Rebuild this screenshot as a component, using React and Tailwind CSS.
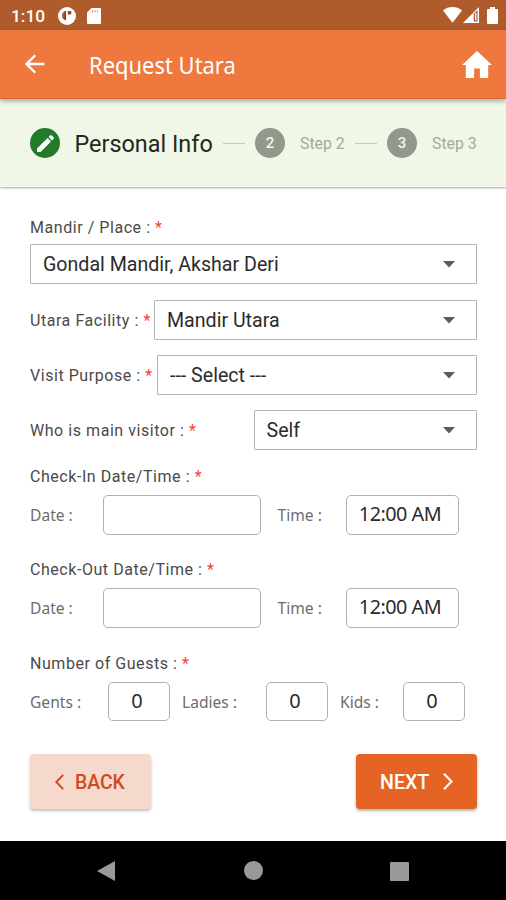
import { useState } from "react";

const roboto = "font-['Roboto',sans-serif]";
const noto = "font-['Noto_Sans',sans-serif]";

function StatusBar() {
  return (
    <div className="h-[30px] bg-[#af5b2b] flex items-center justify-between pl-[11px] pr-[8px] text-white">
      <div className="flex items-center">
        <span className="w-[47px] text-[17.3px] leading-[30px] font-medium pt-px">1:10</span>
        <svg width="18" height="18" viewBox="0 0 18 18" className="mt-px">
          <circle cx="9" cy="9" r="9" fill="#fff" />
          <path d="M8 3.700v9.600C5.500 13 4 11.300 4 8.700S5.500 4.200 8 3.700z" fill="#af5b2b" />
          <path d="M7.300 4v9" stroke="#7d3c18" strokeWidth="1.400" />
          <rect x="9.700" y="4" width="3.600" height="3.400" rx="1" fill="#8f451d" />
        </svg>
        <svg width="14" height="16" viewBox="0 0 14 16" className="ml-[11px] mt-px">
          <path d="M4.500 0H13a1 1 0 0 1 1 1v14a1 1 0 0 1-1 1H1a1 1 0 0 1-1-1V4.500z" fill="#fff" />
          <path d="M5.500 2v2.500M8 2v2.500M10.500 2v2.500" stroke="#af5b2b" strokeWidth="1" opacity=".6" />
        </svg>
      </div>
      <div className="flex items-center">
        <svg width="19" height="16" viewBox="0 0 19 16">
          <path d="M0 3.500C5-1.100 14-1.100 19 3.500L9.500 15.800z" fill="#fff" />
        </svg>
        <svg width="16" height="16" viewBox="0 0 16 16" className="ml-[1px]">
          <path d="M16 0v16H0z" fill="#fff" />
          <path d="M10.800 6.500L14.600 3.200V14.400h-3.800z" fill="#af5b2b" />
          <path d="M12.800 6v7.500" stroke="#fff" strokeWidth="1.300" />
        </svg>
        <svg width="11" height="17" viewBox="0 0 11 17" className="ml-[8px]">
          <path d="M3 0h5v2h2a1 1 0 0 1 1 1v13a1 1 0 0 1-1 1H1a1 1 0 0 1-1-1V3a1 1 0 0 1 1-1h2z" fill="#fff" />
        </svg>
      </div>
    </div>
  );
}

function AppBar() {
  return (
    <div className="relative z-10 h-[69px] bg-[#ee783e] border-b border-[#e06a25] flex items-center text-white shadow-[0_2px_5px_rgba(40,80,90,0.45)]">
      <svg width="20" height="20" viewBox="0 0 20 20" className="ml-[25px]">
        <path d="M19.500 10H1.800M10.300 1.200L1.500 10l8.800 8.800" fill="none" stroke="#fff" strokeWidth="2.300" />
      </svg>
      <h1 className={`ml-[44px] pt-px text-[23.6px] leading-[30px] origin-left scale-x-[0.93] ${noto}`}>
        Request Utara
      </h1>
      <svg width="30" height="27" viewBox="0 0 30 27" className="ml-auto mr-[14px]">
        <path d="M15 0l15 14h-3.800v13h-8.300v-9.500h-5.800V27H3.800V14H0z" fill="#fff" />
      </svg>
    </div>
  );
}

function Step({ number }) {
  return (
    <>
      <span className="h-px w-[22px] mt-px bg-[#c3c8bd]" />
      <span className="ml-[10px] size-[30px] rounded-full bg-[#90998b] flex items-center justify-center text-[15px] font-medium text-[#f1f7e8]">
        {number}
      </span>
      <span className="ml-[15px] w-[55px] pt-px text-[15.8px] text-[#a3a99e]">Step {number}</span>
    </>
  );
}

function Stepper() {
  return (
    <div className="h-[88px] bg-[#f0f7e7] flex items-center pl-[30px] shadow-[0_1px_2px_rgba(0,0,0,0.35)]">
      <span className="size-[30px] rounded-full bg-[#237a2b] flex items-center justify-center">
        <svg width="17" height="17" viewBox="0 0 18 18" fill="#fff">
          <path d="M0 14.300L11.200 3.100l3.700 3.700L3.700 18H0zM12.200 2.100L13.800.5a1.300 1.300 0 0 1 1.800 0l1.900 1.900a1.300 1.300 0 0 1 0 1.800l-1.600 1.600z" />
        </svg>
      </span>
      <span className="ml-[14.5px] w-[148.5px] pt-[3px] text-[23.4px] text-[#22271f]">Personal Info</span>
      <Step number={2} />
      <Step number={3} />
    </div>
  );
}

function Label({ children }) {
  return (
    <span className="whitespace-nowrap text-[16px] leading-5 pt-px tracking-[0.55px] text-[#4a4a4a]">
      {children} : <span className="text-[#f44336]">*</span>
    </span>
  );
}

function SubLabel({ children, className }) {
  return (
    <span className={`shrink-0 pt-[2px] text-[15.6px] text-[#6d6d6d] ${noto} ${className}`}>
      {children} :
    </span>
  );
}

function Select({ value, className = "w-full" }) {
  return (
    <button
      className={`h-10 shrink-0 border border-[#b5b5b5] rounded-[1px] flex items-center justify-between pl-[12px] pr-[21px] text-[19.6px] text-[#2b2b2b] ${className}`}
    >
      <span className="pt-px">{value}</span>
      <svg width="12" height="7" viewBox="0 0 12 7" fill="#5c5c5c">
        <path d="M0 0h12L6 6.500z" />
      </svg>
    </button>
  );
}

function Field({ label, value, className }) {
  return (
    <div className={`flex items-center justify-between ${className}`}>
      <Label>{label}</Label>
      {value}
    </div>
  );
}

function DateTimeRow() {
  const [date, setDate] = useState("");

  return (
    <div className="flex items-center h-10">
      <SubLabel className="w-[72.5px]">Date</SubLabel>
      <input
        value={date}
        onChange={(e) => setDate(e.target.value)}
        className="w-[158px] h-10 border border-[#b0b0b0] rounded-[5px] px-3 outline-none"
      />
      <SubLabel className="ml-[17px] w-[68px]">Time</SubLabel>
      <div
        className={`w-[113px] h-10 border border-[#b0b0b0] rounded-[5px] flex items-center justify-center text-[19.8px] tracking-[-0.5px] text-[#2b2b2b] pb-[2px] pr-[4px] ${noto}`}
      >
        12:00 AM
      </div>
    </div>
  );
}

function Count() {
  return (
    <div
      className={`w-[62px] h-[39px] shrink-0 border border-[#b0b0b0] rounded-[5px] flex items-center justify-center text-[20px] text-[#2b2b2b] pb-[2px] pr-[4px] ${noto}`}
    >
      0
    </div>
  );
}

function NavBar() {
  return (
    <div className="h-[59px] bg-black flex items-center">
      <svg width="18" height="20" viewBox="0 0 18 20" className="ml-[97px]">
        <path d="M18 0v20L0 10z" fill="#999" />
      </svg>
      <span className="ml-[129px] size-[19px] rounded-full bg-[#999]" />
      <span className="ml-[127px] mt-px size-[19px] rounded-[1px] bg-[#999]" />
    </div>
  );
}

export default function App() {
  return (
    <div className={`w-[506px] h-[900px] overflow-hidden bg-white flex flex-col ${roboto}`}>
      <StatusBar />
      <AppBar />
      <Stepper />

      <main className="h-[654px] pl-[30px] pr-[29px] pt-[30px]">
        <div className="h-[27px] flex items-start">
          <Label>Mandir / Place</Label>
        </div>
        <Select value="Gondal Mandir, Akshar Deri" />
        <Field
          label="Utara Facility"
          className="mt-4 h-10"
          value={<Select value="Mandir Utara" className="w-[323px]" />}
        />
        <Field
          label="Visit Purpose"
          className="mt-[15px] h-10"
          value={<Select value="--- Select ---" className="w-[320px]" />}
        />
        <Field
          label="Who is main visitor"
          className="mt-[15px] h-10"
          value={<Select value="Self" className="w-[223.5px]" />}
        />

        <div className="mt-[16px] h-[29px] flex items-start">
          <Label>Check-In Date/Time</Label>
        </div>
        <DateTimeRow />
        <div className="mt-[24px] h-[29px] flex items-start">
          <Label>Check-Out Date/Time</Label>
        </div>
        <DateTimeRow />

        <div className="mt-[25px] h-[29px] flex items-start">
          <Label>Number of Guests</Label>
        </div>
        <div className="flex items-center">
          <SubLabel className="w-[78px]">Gents</SubLabel>
          <Count />
          <SubLabel className="ml-[12px] w-[84px]">Ladies</SubLabel>
          <Count />
          <SubLabel className="ml-[12px] w-[63px]">Kids</SubLabel>
          <Count />
        </div>

        <div className="mt-[33px] flex justify-between">
          <button className="w-[121px] h-[55px] rounded-[4px] bg-[#f5d9cc] text-[#cf4a20] flex items-center pl-[25px] text-[19.4px] font-medium shadow-[0_2px_3px_rgba(0,0,0,0.25)]">
            <svg width="9" height="16" viewBox="0 0 9 16" className="mr-[11px]">
              <path d="M8.200.8L1.300 8l6.900 7.200" fill="none" stroke="currentColor" strokeWidth="1.900" />
            </svg>
            <span className="pt-[3px]">BACK</span>
          </button>
          <button className="w-[121px] h-[55px] rounded-[4px] bg-[#e56425] text-white flex items-center pl-[24px] text-[19.6px] font-medium shadow-[0_2px_3px_rgba(0,0,0,0.3)]">
            <span className="pt-[3px]">NEXT</span>
            <svg width="10" height="17" viewBox="0 0 10 17" className="ml-[14px]">
              <path d="M1 .8l7.500 7.700L1 16.200" fill="none" stroke="currentColor" strokeWidth="2.200" />
            </svg>
          </button>
        </div>
      </main>

      <NavBar />
    </div>
  );
}
